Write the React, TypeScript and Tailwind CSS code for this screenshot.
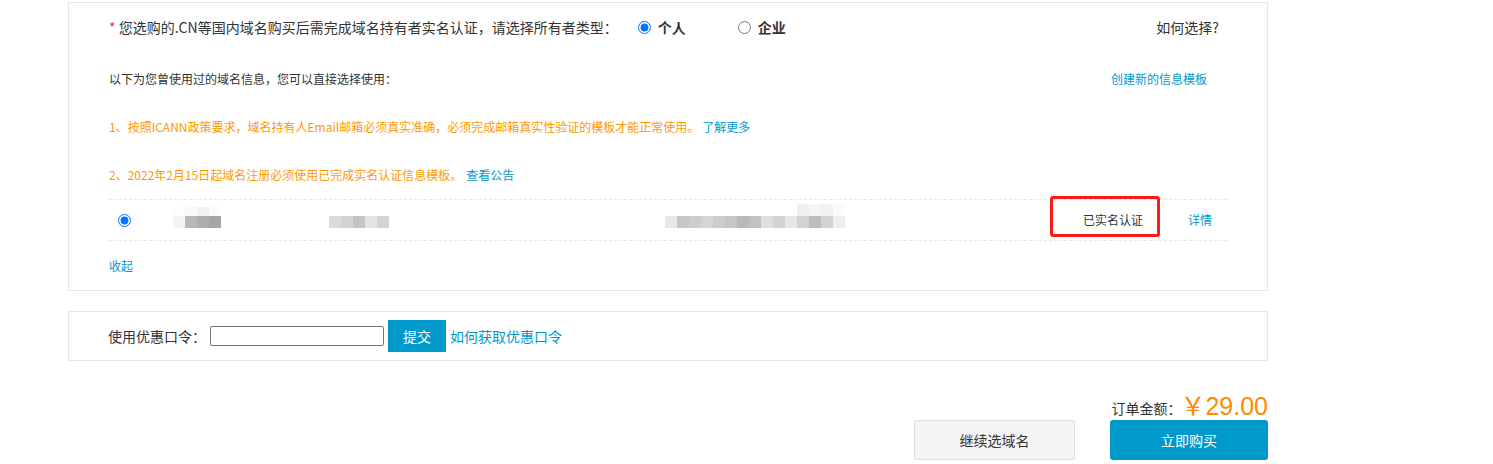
export default function App() {
  const block1Top = ["#fcfdfc", "#f9f9f8", "#f1f2f1", "#fbfbfb"];
  const block1Bottom = ["#f7f4f2", "#b8b8b8", "#aeadac", "#a4a6a8"];
  const block2 = ["#dcd9da", "#d4d2d3", "#c4c4c4", "#e3e3e2", "#d4d4d6"];
  const block3Top = ["#f0f0f0", "#f6f6f6", "#f2f2f2", "#fafcfb"];
  const block3Bottom = [
    "#e8e7e2", "#c5c6ca", "#cecbcc", "#d5d5d3", "#cdcbcd", "#c7c6c4", "#b8b9b9", "#bfc3c4",
    "#e0dfdc", "#d3d3d3", "#e6e6e6", "#d3d2d0", "#bdbdbd", "#d3d3d1", "#eef0ef",
  ];

  return (
    <div className="min-h-[464px] bg-white pt-[2px] pl-[68px] text-[#333] font-['Microsoft_YaHei','Noto_Sans_CJK_SC',sans-serif]">
      {/* 实名认证 / 信息模板 */}
      <div className="w-[1200px] border border-[#e6e6e6] px-[40px]">
        <div className="flex h-[48px] items-center text-[14px]">
          <span>
            <span className="text-[#e4393c]">*</span> 您选购的.CN等国内域名购买后需完成域名持有者实名认证，请选择所有者类型：
          </span>
          <label className="ml-[20px] flex w-[100px] items-center gap-[7px] font-bold">
            <input type="radio" name="owner" defaultChecked className="h-[13px] w-[13px]" />
            个人
          </label>
          <label className="flex items-center gap-[7px] font-bold">
            <input type="radio" name="owner" className="h-[13px] w-[13px]" />
            企业
          </label>
          <span className="ml-auto mr-[8px]">如何选择?</span>
        </div>

        <div className="mt-[4px] flex h-[48px] items-center text-[12px]">
          <span>以下为您曾使用过的域名信息，您可以直接选择使用：</span>
          <a className="ml-auto mr-[20px] text-[#0099cc]">创建新的信息模板</a>
        </div>

        <div className="flex h-[48px] items-center text-[12px] text-[#ff9900]">
          <span>1、按照ICANN政策要求，域名持有人Email邮箱必须真实准确，必须完成邮箱真实性验证的模板才能正常使用。</span>
          <a className="ml-[3px] text-[#0099cc]">了解更多</a>
        </div>

        <div className="flex h-[48px] items-center text-[12px] text-[#ff9900]">
          <span>2、2022年2月15日起域名注册必须使用已完成实名认证信息模板。</span>
          <a className="ml-[4px] text-[#0099cc]">查看公告</a>
        </div>

        <div className="relative flex h-[42px] items-center border-y border-dashed border-[#e6e6e6] text-[12px]">
          <input type="radio" name="tpl" defaultChecked className="ml-[9px] h-[13px] w-[13px]" />
          <div className="ml-[42px] mt-[-5px] flex flex-col">
            <div className="flex">
              {block1Top.map((c, i) => (
                <div key={i} className="h-[9px] w-[12px]" style={{ background: c }} />
              ))}
            </div>
            <div className="flex">
              {block1Bottom.map((c, i) => (
                <div key={i} className="h-[12px] w-[12px]" style={{ background: c }} />
              ))}
            </div>
          </div>
          <div className="ml-[108px] mt-[4px] flex">
            {block2.map((c, i) => (
              <div key={i} className="h-[12px] w-[12px]" style={{ background: c }} />
            ))}
          </div>
          <div className="ml-[276px] mt-[-8px] flex flex-col items-end">
            <div className="flex">
              {block3Top.map((c, i) => (
                <div key={i} className="h-[12px] w-[12px]" style={{ background: c }} />
              ))}
            </div>
            <div className="flex">
              {block3Bottom.map((c, i) => (
                <div key={i} className="h-[12px] w-[12px]" style={{ background: c }} />
              ))}
            </div>
          </div>
          <span className="ml-[238px]">已实名认证</span>
          <a className="ml-[45px] text-[#0099cc]">详情</a>
          <div className="absolute left-[941px] top-[-4px] h-[41px] w-[110px] rounded-[3px] border-[3px] border-[#ff1a1a]" />
        </div>

        <div className="flex h-[49px] items-center text-[12px]">
          <a className="text-[#0099cc]">收起</a>
        </div>
      </div>

      {/* 优惠口令 */}
      <div className="mt-[20px] flex h-[50px] w-[1200px] items-center border border-[#e6e6e6] px-[39px] text-[14px]">
        <span>使用优惠口令：</span>
        <input type="text" className="ml-[4px] h-[20px] w-[174px] rounded-[2px] border border-[#767676]" />
        <button className="ml-[4px] h-[32px] w-[58px] bg-[#0099cc] text-white">提交</button>
        <a className="ml-[4px] text-[#0099cc]">如何获取优惠口令</a>
      </div>

      {/* 订单金额 */}
      <div className="w-[1200px] pt-[31px]">
        <div className="flex h-[28px] items-end justify-end">
          <span className="mb-[1px] text-[14px]">订单金额：</span>
          <span className="ml-[-1px] text-[25px] leading-[28px] text-[#ff8a00] font-['Liberation_Sans','Noto_Sans_CJK_SC',sans-serif]">
            ￥29.00
          </span>
        </div>
        <div className="flex justify-end gap-[35px]">
          <button className="h-[40px] w-[161px] rounded-[3px] border border-[#dcdcdc] bg-[#f5f5f5] text-[14px] text-[#333]">
            继续选域名
          </button>
          <button className="h-[40px] w-[158px] rounded-[3px] bg-[#0099cc] text-[14px] text-white">
            立即购买
          </button>
        </div>
      </div>
    </div>
  );
}
